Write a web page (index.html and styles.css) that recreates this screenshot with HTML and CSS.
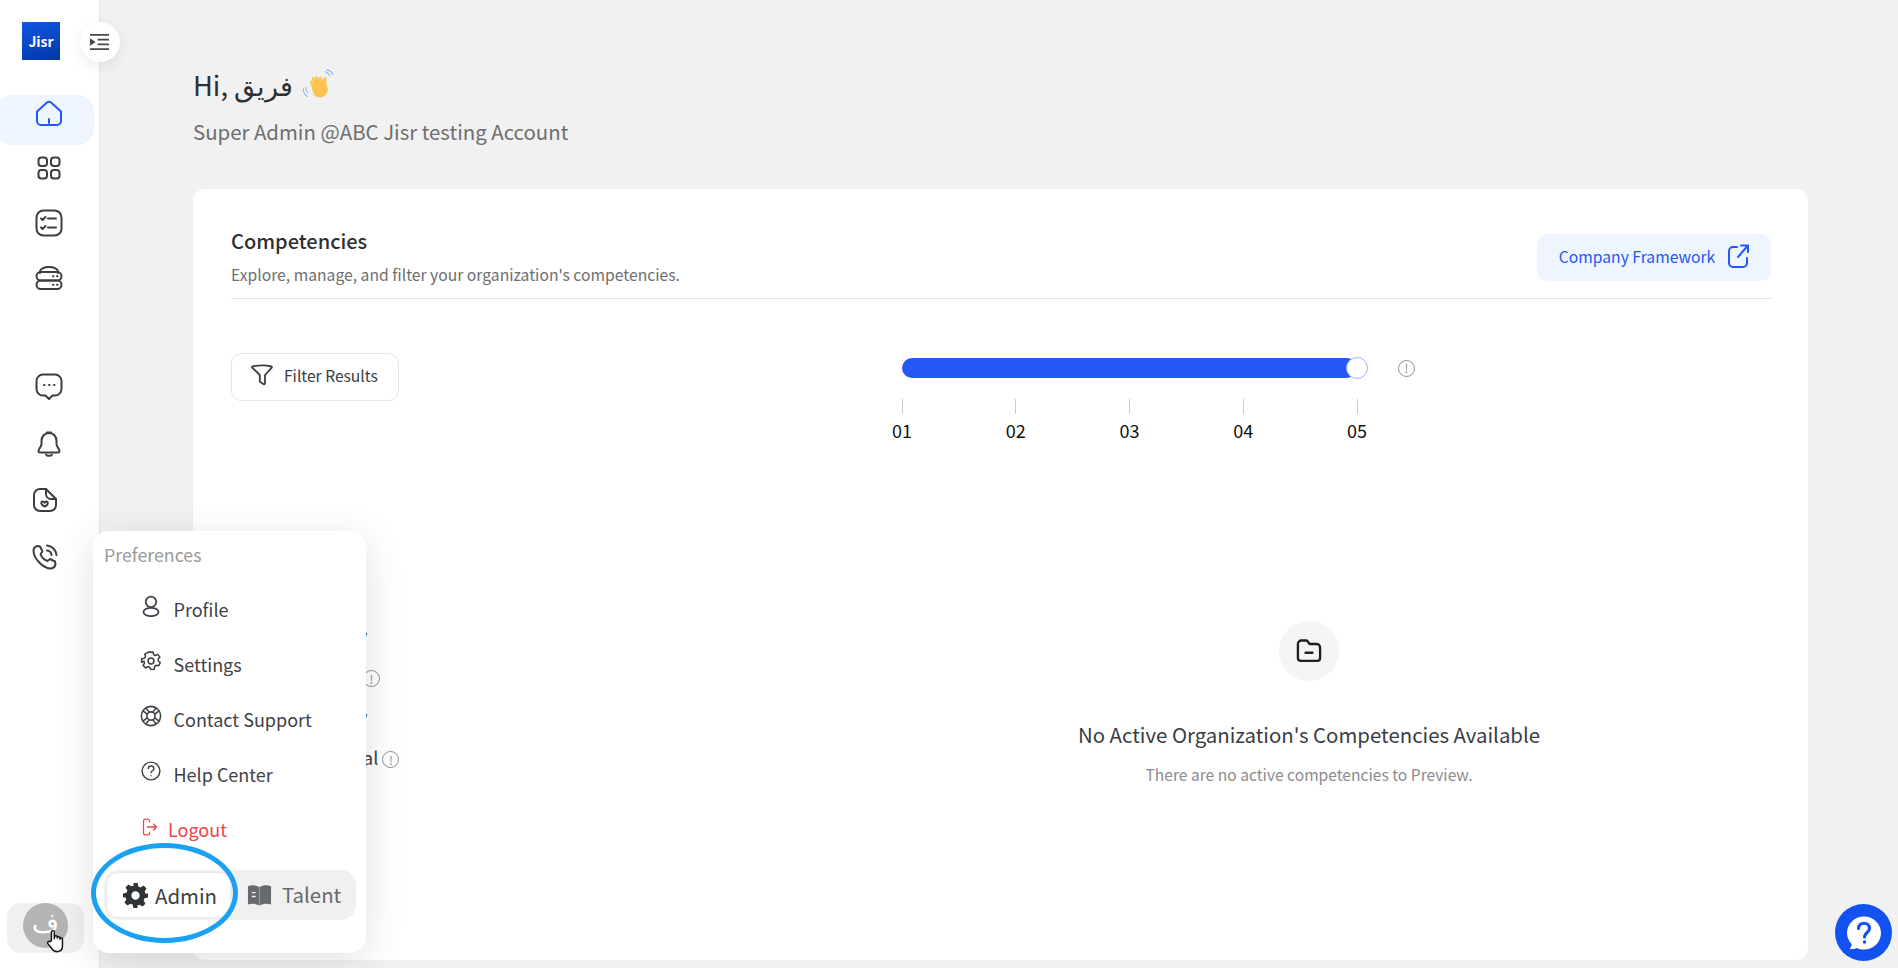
FILE: index.html
```html
<!DOCTYPE html>
<html lang="en">
<head>
<meta charset="utf-8">
<title>Jisr</title>
<link rel="stylesheet" href="styles.css">
</head>
<body>
<div class="app">
  <aside class="sidebar">
    <div class="logo"><span>Jisr</span></div>
    <nav class="nav">
      <a class="nav-item active"><svg class="ic" viewBox="0 0 28 28"><path d="M2 12.500 12 3.600a3 3 0 0 1 4 0l10 8.900V22a4 4 0 0 1-4 4H6a4 4 0 0 1-4-4z"/><path d="M14 20v4"/></svg></a>
      <a class="nav-item"><svg class="ic" viewBox="0 0 28 28"><rect x="3.500" y="3.500" width="8.500" height="8.500" rx="2.800"/><rect x="16" y="3.500" width="8.500" height="8.500" rx="2.800"/><rect x="3.500" y="16" width="8.500" height="8.500" rx="2.800"/><rect x="16" y="16" width="8.500" height="8.500" rx="2.800"/></svg></a>
      <a class="nav-item"><svg class="ic" viewBox="0 0 28 28"><rect x="1.500" y="1.500" width="25" height="25" rx="7"/><path d="M6 9.500l1.500 1.500 3-3M6 18.500 7.500 20l3-3M13 9.500h8M13 18.500h8"/></svg></a>
      <a class="nav-item"><svg class="ic" viewBox="0 0 28 28"><path d="M5 9V7.500C5 5 9 3 14 3s9 2 9 4.500V9"/><rect x="1.500" y="8" width="25" height="8.500" rx="4.200"/><rect x="1.500" y="16.500" width="25" height="8.500" rx="4.200"/><path d="M18 12.300h.5M22 12.300h.5M18 20.800h.5M22 20.800h.5"/></svg></a>
    </nav>
    <nav class="nav nav-lower">
      <a class="nav-item"><svg class="ic" viewBox="0 0 28 28"><path d="M8 1.500h12a6.500 6.500 0 0 1 6.500 6.500v8a6.500 6.500 0 0 1-6.500 6.500h-2.500L14 26l-3.500-3.500H8A6.500 6.500 0 0 1 1.500 16V8A6.500 6.500 0 0 1 8 1.500z"/><path d="M9 12h.5M14 12h.5M19 12h.5"/></svg></a>
      <a class="nav-item"><svg class="ic" viewBox="0 0 28 28"><path d="M14 3c-5 0-7.500 4-7.500 8v3c0 3-3 4.500-3 7 0 1 .7 1.500 2 1.500h17c1.300 0 2-.5 2-1.500 0-2.500-3-4-3-7v-3c0-4-2.500-8-7.500-8z"/><path d="M12 2.500h4M11 24.500c1 1.800 5 1.800 6 0"/></svg></a>
      <a class="nav-item shifted"><svg class="ic" viewBox="0 0 28 28"><path d="M15 3H9a6 6 0 0 0-6 6v10a6 6 0 0 0 6 6h10a6 6 0 0 0 6-6v-6z"/><path d="M15 3v5a5 5 0 0 0 5 5h5"/><path d="M10.500 16c1-1 2.700-.3 3.200.7.300-1 2-1.600 2.900-.5.900 1.300-.8 3.600-2.900 4.300-2-.5-4.200-3-3.200-4.500z"/></svg></a>
      <a class="nav-item shifted"><svg class="ic" viewBox="0 0 28 28"><path d="M6.500 3 9 3.500l2.500 5-2 2.500c1 3 4 6 7 7l2.500-2 5 2.500.500 2.500c-.5 3-3 4.500-5.500 4.500C12 25 3 16 2.500 8 2.500 5.500 4 3.500 6.500 3z"/><path d="M16 2.500c5 .5 9 4.500 9.500 9.500M16 7.500c2.500.3 4.200 2 4.500 4.500"/></svg></a>
    </nav>
    <div class="user-chip">
      <div class="avatar">ف</div>
      <svg class="hand" viewBox="0 0 20 28"><path d="M6 14V4.500a1.600 1.600 0 0 1 3.200 0V12l.3-2a1.500 1.500 0 0 1 3 .2l.1 1a1.500 1.500 0 0 1 3 .3v1a1.400 1.400 0 0 1 2.800.3V20c0 4-2.500 6.500-6 6.500-3 0-4.500-1-6-3.500L2 17.500c-1-1.800 1.200-3.300 2.500-2z"/></svg>
    </div>
  </aside>

  <button class="collapse" type="button" aria-label="Toggle sidebar"><svg viewBox="0 0 22 18"><path class="line" d="M1 1.500h20M9 6.500h12M9 11.500h12M1 16.500h20"/><path class="tri" d="M1 5l6 4-6 4z"/></svg></button>

  <main class="main">
    <header class="hello">
      <h1 class="hello-title">Hi, فريق
        <svg class="wave" viewBox="1 0 29 28"><path class="wave-arc" d="M4 17c-.8 2 0 4 2 5.500M1.500 18c-.5 3 1 6 4 8M21 2.500c2 .2 4 1.600 5 4M23 .8c2.500.2 5 2 6 4.800"/><path class="wave-hand" d="M7.800 12.500c-.8-1 .6-2.300 1.600-1.400l1.200 1.100-1.500-3c-.6-1.200 1-2.400 2-1.300l2 2.600-.9-2.500c-.4-1.200 1.300-2.100 2-1l2 3.300-.2-2.200c-.1-1.300 1.700-1.700 2.200-.5l1.200 3.500c.2-1.600.9-3 2-3.400 1.200-.4 2 .5 1.800 1.700-.6 2.500-.5 4.700.4 7 1.400 4-.5 8.100-4 9.600-3.300 1.500-6.300.5-8.500-2.400z"/></svg>
      </h1>
      <p class="hello-sub">Super Admin @ABC Jisr testing Account</p>
    </header>

    <section class="card">
      <div class="card-head">
        <div>
          <h2 class="card-title">Competencies</h2>
          <p class="card-sub">Explore, manage, and filter your organization's competencies.</p>
        </div>
        <a class="framework">Company Framework
          <svg viewBox="0 0 22 24"><path d="M10 3H6a4 4 0 0 0-4 4v12a4 4 0 0 0 4 4h10a4 4 0 0 0 4-4v-5M11 13 20.500 2M14 1.500H21V8"/></svg>
        </a>
      </div>

      <div class="tools">
        <button class="filter" type="button"><svg viewBox="0 0 22 22"><path d="M1.500 2.500c6-1.300 13-1.300 19 0 .5.200.6.800.3 1.100l-6.800 7.400v8.300c0 .9-1 1.300-1.700.8l-3-2.100c-.3-.3-.5-.7-.5-1.100V11L1.200 3.600c-.3-.3-.2-.9.300-1.100z"/></svg>Filter Results</button>
        <div class="scale">
          <div class="track-row">
            <div class="track"><span class="knob"></span></div>
            <span class="info scale-info">!</span>
          </div>
          <div class="ticks">
            <div class="tick"><i></i><b>01</b></div>
            <div class="tick"><i></i><b>02</b></div>
            <div class="tick"><i></i><b>03</b></div>
            <div class="tick"><i></i><b>04</b></div>
            <div class="tick"><i></i><b>05</b></div>
          </div>
        </div>
      </div>

      <div class="content">
        <ul class="levels">
          <li class="lv-a">Company</li>
          <li class="lv-b">Leadership <span class="info">!</span></li>
          <li class="lv-a">Company</li>
          <li class="lv-c">Functional <span class="info">!</span></li>
        </ul>
        <div class="empty">
          <div class="empty-ic"><svg viewBox="0 0 24 24"><path d="M2.500 6a3 3 0 0 1 3-3h3.800a2 2 0 0 1 1.500.7L12.500 6h6a3 3 0 0 1 3 3v9a2.500 2.500 0 0 1-2.500 2.500H5A2.500 2.500 0 0 1 2.500 18z"/><path d="M9 13.500h6"/></svg></div>
          <h3 class="empty-title">No Active Organization's Competencies Available</h3>
          <p class="empty-sub">There are no active competencies to Preview.</p>
        </div>
      </div>
    </section>
  </main>

  <div class="popover">
    <div class="pop-head">Preferences</div>
    <ul class="menu">
      <li><svg viewBox="0 0 20 21"><circle cx="10" cy="6.500" r="5"/><ellipse cx="10" cy="16.200" rx="7.200" ry="4"/></svg>Profile</li>
      <li><svg viewBox="0 0 24 24"><circle cx="12" cy="12" r="3.200"/><path d="M10 2h4l.6 2.800 1.900.9 2.600-1.200 2.300 3-1.900 2 .2 2.200 2.100 1.700-1.700 3.500-2.800-.5-1.700 1.400-.3 2.800-3.900.4-1.100-2.600-2.100-.6-2.400 1.500-2.700-2.800 1.500-2.400-.5-2.100L1.400 13l.2-3.900 2.800-.3L5.700 7 5 4.300l3.200-2z" transform="translate(.3 .3)"/></svg>Settings</li>
      <li><svg viewBox="0 0 24 24"><circle cx="12" cy="12" r="10.500"/><circle cx="12" cy="12" r="4.500"/><path d="M6.500 3.200 10 7.800M3.200 6.500 7.800 10M17.500 3.200 14 7.800M20.800 6.500 16.200 10M6.500 20.800 10 16.200M3.200 17.500 7.800 14M17.500 20.800 14 16.200M20.800 17.500 16.200 14"/></svg>Contact Support</li>
      <li><svg viewBox="-1 -1 26 26"><circle cx="12" cy="12" r="10.500"/><path d="M8.800 9.200c0-4.200 6.600-4.200 6.600 0 0 2.500-3.400 2.600-3.400 5M12 17.500v.2"/></svg>Help Center</li>
      <li class="logout"><svg viewBox="0 0 20 24"><path d="M10 5V4a2.500 2.500 0 0 0-2.500-2.500h-3A2.500 2.500 0 0 0 2 4v16a2.500 2.500 0 0 0 2.500 2.500h3A2.500 2.500 0 0 0 10 20v-1M7 12h12M15.500 8l4 4-4 4"/></svg>Logout</li>
    </ul>
    <div class="switch">
      <a class="sw sw-on"><svg viewBox="0 0 24 24"><path fill-rule="evenodd" d="M10 0h4l.7 3.300 2.200.9 2.900-1.800 2.800 2.800-1.800 2.900.9 2.200L24 10v4l-3.300.7-.9 2.200 1.800 2.900-2.800 2.800-2.900-1.800-2.200.9L14 24h-4l-.7-3.300-2.200-.9-2.900 1.800-2.800-2.800 1.800-2.900-.9-2.200L0 14v-4l3.300-.7.9-2.200-1.800-2.900 2.800-2.800 2.900 1.800 2.200-.9zM12 8a4 4 0 1 0 0 8 4 4 0 0 0 0-8z"/></svg>Admin</a>
      <a class="sw"><svg viewBox="0 0 26 24"><path d="M1 3c4-1.500 8-1.500 11.800.8V23C9 21 5 20.700 1 22zM25 3c-4-1.500-8-1.500-11.800.8V23C17 21 21 20.700 25 22z"/><path class="bk-l" d="M5 9.500h4M5 13.500h4"/></svg>Talent</a>
    </div>
  </div>
  <div class="ring"></div>

  <a class="help" aria-label="Help"><svg viewBox="0 0 36 36"><path class="bubble" d="M18 1.500C27.500 1.500 35 9 35 18s-7.500 16.500-17 16.500c-2.500 0-5-.5-7.200-1.500-2 .9-5 1.300-7.300.9 1.500-1.400 2.300-3.300 2-5C2.800 25.900 1 22 1 18 1 9 8.500 1.500 18 1.500z"/><path class="qm" d="M12.500 13.500c0-7 11-7 11 0 0 4-5 4-5 8.500"/><circle class="qd" cx="18.500" cy="27" r="1.700"/></svg></a>
</div>
</body>
</html>
```
FILE: styles.css
```css
* { box-sizing: border-box; }
html, body { margin: 0; height: 100%; overflow: hidden; }
body {
  font-family: "Noto Sans CJK SC", "Noto Sans", sans-serif;
  background: #f1f1f1;
  color: #2f3338;
}
h1, h2, h3, p, ul { margin: 0; padding: 0; list-style: none; font-weight: 400; }
.app { position: relative; display: flex; height: 968px; width: 1898px; overflow: hidden; }

.sidebar {
  flex: 0 0 100px;
  background: #fff;
  border-right: 1px solid #e4e4e4;
  display: flex;
  flex-direction: column;
  padding: 22px 5px 15px 0;
}
.logo {
  width: 38px; height: 38px; margin-left: 22px;
  background: linear-gradient(160deg, #0f56e6, #0338a3);
  color: #fff; font-size: 14px; font-weight: 700; line-height: 38px; text-align: center;
}
.nav { display: flex; flex-direction: column; gap: 5px; margin-top: 35px; }
.nav-lower { margin-top: 59px; gap: 6.500px; }
.nav-item {
  height: 50px; display: flex; align-items: center; justify-content: center;
  padding: 0 0 14px 3px;
}
.nav-item.active { border-radius: 16px; margin-left: -4px; padding-left: 7px; background: #eef5ff; }
.nav-item.active .ic { stroke: #2458f5; }
.nav-item.shifted { padding-right: 4px; padding-left: 0; }
.ic { width: 28px; height: 28px; fill: none; stroke: #3a3d42; stroke-width: 2; stroke-linecap: round; stroke-linejoin: round; }
.user-chip {
  position: relative;
  margin: auto 0 0 7px;
  width: 77px; height: 50px;
  background: #f0f0f0; border-radius: 14px;
  padding-left: 16px;
}
.avatar {
  width: 45px; height: 45px; border-radius: 50%;
  background: #b4b4b4; color: #fff;
  font-size: 26px; line-height: 36px; text-align: center;
}
.hand { position: absolute; left: 39px; top: 25px; width: 18px; height: 25px; fill: #fff; stroke: #111; stroke-width: 1.600; stroke-linejoin: round; }

.collapse {
  position: absolute; left: 80px; top: 22px;
  width: 40px; height: 40px; padding: 0 2px 0 0; border: 0; border-radius: 50%;
  background: #fff; box-shadow: 0 4px 14px rgba(0,0,0,.08);
  display: flex; align-items: center; justify-content: center;
}
.collapse svg { width: 21px; height: 18px; }
.collapse .line { fill: none; stroke: #46494e; stroke-width: 1.800; }
.collapse .tri { fill: #46494e; }

.main { flex: 1; min-width: 0; display: flex; flex-direction: column; padding: 0 90px 8px 93px; }
.hello { padding-top: 62px; height: 189px; }
.hello-title { font-size: 27.300px; line-height: 44px; color: #2c2f33; display: flex; align-items: center; gap: 10px; }
.wave { width: 31px; height: 30px; }
.wave-arc { fill: none; stroke: #8db4f7; stroke-width: 1; }
.wave-hand { fill: #fcc44d; }
.hello-sub { font-size: 20.400px; line-height: 32px; color: #6e6e6e; margin-top: 9px; }

.card { flex: 1; background: #fff; border-radius: 12px; padding: 0 37px 0 38px; }
.card-head {
  display: flex; justify-content: space-between; align-items: flex-start;
  height: 110px; padding-top: 36px; border-bottom: 1px solid #e4e4e4;
}
.card-title { font-size: 20px; font-weight: 500; line-height: 32px; color: #2c2f33; }
.card-sub { font-size: 15.700px; line-height: 26px; color: #6e6e6e; margin-top: 5px; }
.framework {
  margin-top: 9px; width: 234px; height: 47px; border-radius: 10px;
  background: #eef5ff; color: #2458f5; font-size: 15.700px;
  display: flex; align-items: center; justify-content: center; gap: 12px; padding-bottom: 3px;
}
.framework svg { width: 22px; height: 24px; fill: none; stroke: #2458f5; stroke-width: 2; stroke-linecap: round; stroke-linejoin: round; }

.tools { display: flex; align-items: flex-start; padding-top: 54px; }
.filter {
  width: 168px; height: 48px; border: 1px solid #e6e6e6; border-radius: 10px; background: #fff;
  font: inherit; font-size: 15.600px; color: #3a3d42; padding: 0 0 4px 19px;
  display: flex; align-items: center; gap: 11px;
}
.filter svg { width: 22px; height: 22px; fill: none; stroke: #3a3d42; stroke-width: 1.800; stroke-linejoin: round; }
.scale { margin-left: 503px; padding-top: 4px; }
.track-row { display: flex; align-items: center; gap: 40px; height: 22px; }
.track { position: relative; width: 455px; height: 20px; background: #2458f5; border-radius: 10px; }
.knob {
  position: absolute; right: -11px; top: -1px; width: 22px; height: 22px;
  background: #fff; border: 1.500px solid #9db8fb; border-radius: 50%;
}
.info {
  display: inline-flex; width: 17px; height: 17px; border: 1.300px solid #8f8f8f; border-radius: 50%;
  color: #8f8f8f; font-size: 12px; line-height: 1; align-items: center; justify-content: center; vertical-align: middle;
}
.scale-info { margin-left: 1px; }
.ticks { display: flex; gap: 87.750px; margin: 20px 0 0 -13px; }
.tick { width: 26px; display: flex; flex-direction: column; align-items: center; }
.tick i { width: 1px; height: 15px; background: #ccc; }
.tick b { font-weight: 400; font-size: 18px; line-height: 26px; color: #111; margin-top: 3px; }

.content { display: flex; }
.levels { flex: 0 0 616px; padding: 172px 0 0 0; }
.levels li { height: 40.500px; line-height: 40.500px; font-size: 18px; color: #3f4247; white-space: nowrap; }
.lv-a { padding-left: 56px; color: #c4c4c4; }
.lv-b { padding-left: 35px; }
.lv-c { padding-left: 58px; }
.empty { flex: 1; display: flex; flex-direction: column; align-items: center; padding-top: 178px; }
.empty-ic { width: 60px; height: 60px; border-radius: 50%; background: #f5f5f5; display: flex; align-items: center; justify-content: center; }
.empty-ic svg { width: 28px; height: 28px; fill: none; stroke: #1d1f22; stroke-width: 2; stroke-linecap: round; stroke-linejoin: round; }
.empty-title { font-size: 20.400px; line-height: 32px; color: #3a3d42; margin-top: 37px; }
.empty-sub { font-size: 15.600px; line-height: 26px; color: #8c8c8c; margin-top: 11px; }

.popover {
  position: absolute; left: 93px; top: 531px; width: 273px; height: 422px;
  background: #fff; border-radius: 16px;
  box-shadow: 0 8px 40px rgba(0,0,0,.12);
  padding: 9px 10px 0 11px;
}
.pop-head { font-size: 17.800px; line-height: 28px; color: #9a9a9a; }
.menu { margin-top: 13px; }
.menu li {
  height: 55px; display: flex; align-items: center; gap: 11.500px;
  padding-left: 36px; font-size: 18px; color: #3f4247;
}
.menu svg { width: 22px; height: 22px; flex: none; margin-top: -6px; fill: none; stroke: #3f4247; stroke-width: 1.700; stroke-linecap: round; stroke-linejoin: round; }
.menu .logout { color: #f2444a; gap: 11px; padding-left: 38px; }
.menu .logout svg { width: 15px; height: 18px; stroke: #f2444a; margin-top: -4px; }
.switch {
  display: flex; align-items: center; width: 252px; height: 50px; margin-top: 14px;
  background: #f0f0f0; border-radius: 15px; padding: 0 2px 3px; font-size: 20.400px; color: #66696d;
}
.sw { display: flex; flex: none; align-items: center; gap: 10px; height: 46px; padding: 0 0 0 16px; border-radius: 12px; }
.sw svg { width: 25px; height: 24px; fill: #66696d; margin-top: 3px; }
.sw .bk-l { stroke: #f0f0f0; stroke-width: 1.500; fill: none; }
.sw-on { width: 125px; background: #fff; border: 1px solid #e8e8e8; color: #3a3d42; gap: 7px; margin-top: 3px; }
.sw-on svg { width: 25px; height: 25px; fill: #2f3338; margin-top: 0; }
.ring {
  position: absolute; left: 91px; top: 843px; width: 147px; height: 100px;
  border: 5.500px solid #1ba1f2; border-radius: 50%;
}
.help {
  position: absolute; left: 1835px; top: 904px; width: 57px; height: 57px; border-radius: 50%;
  background: #1352f1; display: flex; align-items: center; justify-content: center;
}
.help svg { width: 36px; height: 36px; }
.bubble { fill: #fff; }
.qm { fill: none; stroke: #1352f1; stroke-width: 3.200; stroke-linecap: round; }
.qd { fill: #1352f1; }
```
